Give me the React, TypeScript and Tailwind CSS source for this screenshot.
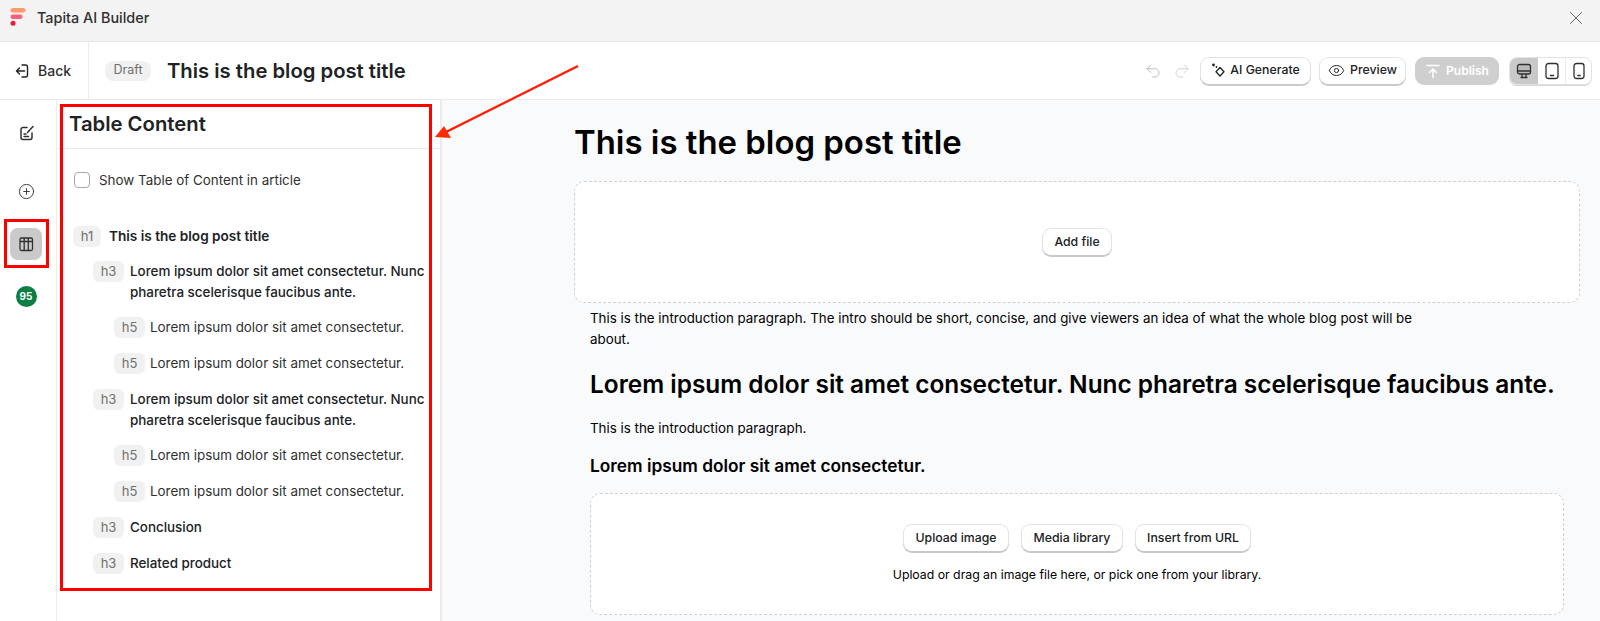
import { Eye, Redo2, Undo2, X, CirclePlus } from "lucide-react";

type TocItem = {
  tag: string;
  text: string;
  level: number;
};

const TOC_ITEMS: TocItem[] = [
  { tag: "h3", text: "Lorem ipsum dolor sit amet consectetur. Nunc pharetra scelerisque faucibus ante.", level: 1 },
  { tag: "h5", text: "Lorem ipsum dolor sit amet consectetur.", level: 2 },
  { tag: "h5", text: "Lorem ipsum dolor sit amet consectetur.", level: 2 },
  { tag: "h3", text: "Lorem ipsum dolor sit amet consectetur. Nunc pharetra scelerisque faucibus ante.", level: 1 },
  { tag: "h5", text: "Lorem ipsum dolor sit amet consectetur.", level: 2 },
  { tag: "h5", text: "Lorem ipsum dolor sit amet consectetur.", level: 2 },
  { tag: "h3", text: "Conclusion", level: 1 },
  { tag: "h3", text: "Related product", level: 1 },
];

const Logo = () => (
  <svg width="16" height="18" viewBox="0 0 16 18" className="shrink-0">
    <rect x="0.5" y="0" width="15" height="4.5" rx="2.2" fill="#fb9a6c" />
    <rect x="0.5" y="6.5" width="12" height="4.5" rx="2.2" fill="#fb5f7e" />
    <circle cx="3" cy="15.300" r="2.500" fill="#ec1c3c" />
  </svg>
);

const BackIcon = () => (
  <svg width="15" height="16" viewBox="0 0 15 16" fill="none" stroke="#202223" strokeWidth="1.4" strokeLinecap="round" strokeLinejoin="round">
    <path d="M7 2h3.500a2 2 0 0 1 2 2v8a2 2 0 0 1-2 2H7" />
    <path d="M9.500 8H1.500M4.500 5l-3 3 3 3" />
  </svg>
);

const EditIcon = () => (
  <svg width="16" height="16" viewBox="0 0 16 16" fill="none" stroke="#303030" strokeWidth="1.5" strokeLinecap="round" strokeLinejoin="round" className="mr-[3px]">
    <path d="M8 2.500H4a2 2 0 0 0-2 2v8a2 2 0 0 0 2 2h7a2 2 0 0 0 2-2V8" />
    <path d="M14 1.500 8.500 7.500M5 9h2M5 11.500h4.500" />
  </svg>
);

const SparkIcon = () => (
  <svg width="15" height="15" viewBox="0 0 15 15" fill="none" stroke="#202223" strokeWidth="1.3">
    <path d="M9 4.500 L13 8.800 L9 13 L5 8.800 Z" strokeLinejoin="round" />
    <circle cx="2.500" cy="2" r="1.400" fill="#202223" stroke="none" />
    <circle cx="5.500" cy="4" r="0.900" fill="#202223" stroke="none" />
  </svg>
);

const PublishIcon = () => (
  <svg width="16" height="16" viewBox="0 0 16 16" fill="none" stroke="white" strokeWidth="1.5" strokeLinecap="round" strokeLinejoin="round">
    <path d="M2 2.500h12M8 14.500V6M4.500 9.500 8 6l3.500 3.500" />
  </svg>
);

const DesktopIcon = () => (
  <svg width="16" height="16" viewBox="0 0 16 16" fill="none" stroke="#303030" strokeWidth="1.3" strokeLinejoin="round">
    <rect x="1.500" y="1.500" width="13" height="9.500" rx="2" fill="#8a8a8a" fillOpacity="0.25" />
    <path d="M1.500 8h13M6 11v3M10 11v3M4.500 14.500h7" />
  </svg>
);

const TabletIcon = () => (
  <svg width="16" height="18" viewBox="0 0 16 18" fill="none" stroke="#303030" strokeWidth="1.3" strokeLinecap="round">
    <rect x="2" y="1.500" width="12" height="15" rx="2.500" />
    <path d="M6.500 13.500h3" />
  </svg>
);

const PhoneIcon = () => (
  <svg width="14" height="18" viewBox="0 0 14 18" fill="none" stroke="#303030" strokeWidth="1.3" strokeLinecap="round">
    <rect x="2" y="1.500" width="10" height="15" rx="2.500" />
    <path d="M5.800 13.500h2.400" />
  </svg>
);

const TableIcon = () => (
  <svg width="16" height="16" viewBox="0 0 16 16" fill="none" stroke="#303030" strokeWidth="1.3">
    <rect x="2" y="2" width="12.500" height="12.500" rx="1.500" />
    <path d="M2 5.500h12.500M6.200 2v12.500M10.300 2v12.500" />
  </svg>
);

const Btn = ({ children, className = "" }: { children: React.ReactNode; className?: string }) => (
  <button className={`flex h-7 items-center justify-center rounded-[9px] border border-[#e3e3e3] border-b-[#c8c8c8] bg-white text-[12.3px] font-medium text-[#202223] shadow-[0_1px_0_#c9c9c9] ${className}`}>
    {children}
  </button>
);

const Tag = ({ label, className = "w-[31px]" }: { label: string; className?: string }) => (
  <span className={`flex h-[21px] shrink-0 items-center justify-center rounded-md bg-[#f1f1f1] text-[13px] text-[#6f6f6f] ${className}`}>
    {label}
  </span>
);

export default function App() {
  return (
    <div className="relative flex h-[621px] w-[1600px] flex-col overflow-hidden bg-white font-['Inter',sans-serif] text-[#202223]">
      {/* window bar */}
      <div className="flex h-[42px] shrink-0 items-center justify-between border-b border-[#e6e6e6] bg-[#f3f3f3] pb-[6px] pl-[10px] pr-[13px]">
        <div className="flex items-center gap-[11px]">
          <Logo />
          <span className="text-[14.4px] font-medium text-[#303030]">Tapita AI Builder</span>
        </div>
        <X size={22} strokeWidth={1} className="text-[#5c5c5c]" />
      </div>

      {/* top bar */}
      <div className="flex h-[58px] shrink-0 items-center border-b border-[#ebebeb]">
        <div className="flex h-full w-[89px] items-center gap-[8px] border-r border-[#ebebeb] pl-[15px]">
          <BackIcon />
          <span className="text-sm font-medium text-[#303030]">Back</span>
        </div>
        <span className="ml-4 flex h-5 w-[46px] items-center justify-center rounded-lg bg-[#f1f1f1] text-[12.5px] text-[#6f6f6f]">Draft</span>
        <h1 className="ml-[16px] pt-[1px] text-[20.25px] font-semibold">This is the blog post title</h1>
        <div className="ml-auto flex items-center pr-[8px]">
          <Undo2 size={18} strokeWidth={1.2} className="text-[#b5b5b5]" />
          <Redo2 size={18} strokeWidth={1.2} className="ml-[11px] text-[#cccccc]" />
          <Btn className="ml-[9px] w-[111px] gap-[4px]">
            <SparkIcon />
            AI Generate
          </Btn>
          <Btn className="ml-2 w-[87px] gap-[5px]">
            <Eye size={17} strokeWidth={1.4} />
            Preview
          </Btn>
          <button className="ml-[9px] flex h-7 w-[84px] items-center justify-center gap-[5px] rounded-[9px] bg-[#cfcfcf] text-xs font-semibold text-white">
            <PublishIcon />
            Publish
          </button>
          <div className="ml-[10px] flex h-7 w-[83px] overflow-hidden rounded-lg border border-[#e3e3e3] shadow-[0_1px_0_#d4d4d4]">
            <div className="flex w-[28px] items-center justify-center bg-[#c9c9c9]">
              <DesktopIcon />
            </div>
            <div className="flex w-[28px] items-center justify-center border-r border-[#ebebeb]">
              <TabletIcon />
            </div>
            <div className="flex flex-1 items-center justify-center">
              <PhoneIcon />
            </div>
          </div>
        </div>
      </div>

      <div className="flex min-h-0 flex-1">
        {/* icon rail */}
        <aside className="flex w-[57px] shrink-0 flex-col items-center border-r border-[#ebebeb] pt-[25px]">
          <EditIcon />
          <CirclePlus size={17} strokeWidth={1.3} className="mr-[4px] mt-[42px] text-[#303030]" />
          <div className="mr-[4px] mt-[28px] flex h-8 w-8 items-center justify-center rounded-lg bg-[#cacaca]">
            <TableIcon />
          </div>
          <span className="mr-[4px] mt-[26px] flex h-[21px] w-[21px] items-center justify-center rounded-full bg-[#0a7f43] text-[10px] font-bold text-white">95</span>
        </aside>

        {/* table of content panel */}
        <section className="w-[385px] shrink-0 border-r-2 border-[#ebebeb]">
          <div className="flex h-[49px] items-center border-b border-[#ebebeb] pl-[12px]">
            <h2 className="text-[20.3px] font-semibold">Table Content</h2>
          </div>
          <label className="ml-[17px] mt-[21px] flex items-center gap-[9px]">
            <span className="h-4 w-4 rounded-[4px] border border-[#a8a8a8] bg-white" />
            <span className="text-[13.4px] text-[#303030]">Show Table of Content in article</span>
          </label>
          <div className="ml-[16px] mt-[36px] flex items-center gap-[8px]">
            <Tag label="h1" className="w-[28px]" />
            <span className="text-[13.6px] font-semibold">This is the blog post title</span>
          </div>
          <ul className="mt-[14px] flex flex-col gap-[15px] pr-1">
            {TOC_ITEMS.map((item, i) => (
              <li key={i} className={`flex items-start ${item.level === 1 ? "gap-[6px] pl-[36px]" : "gap-[5px] pl-[57px]"}`}>
                <Tag label={item.tag} />
                <span className={`text-[13.4px] leading-[20.5px] ${item.level === 1 ? "font-medium text-[#202223]" : "text-[#303030]"}`}>{item.text}</span>
              </li>
            ))}
          </ul>
        </section>

        {/* article preview */}
        <main className="min-w-0 flex-1 bg-[#f9fafb] pl-[132px] pr-[20px] pt-[20px] text-black">
          <h1 className="text-[32.9px] leading-[44px] font-semibold">This is the blog post title</h1>
          <div className="mt-[17px] flex h-[122px] items-center justify-center rounded-[10px] border border-dashed border-[#cfcfcf] bg-white">
            <Btn className="w-[70px]">Add file</Btn>
          </div>
          <div className="pl-4 pr-[16px]">
            <p className="mt-[5px] max-w-[840px] text-[13.35px] leading-[21px]">
              This is the introduction paragraph. The intro should be short, concise, and give viewers an idea of what the whole blog post will be about.
            </p>
            <h2 className="mt-[18px] text-[24.4px] leading-[32px] font-semibold whitespace-nowrap">Lorem ipsum dolor sit amet consectetur. Nunc pharetra scelerisque faucibus ante.</h2>
            <p className="mt-[18px] text-[13.35px] leading-[21px]">This is the introduction paragraph.</p>
            <h3 className="mt-[15px] text-[17.3px] leading-[24px] font-semibold">Lorem ipsum dolor sit amet consectetur.</h3>
            <div className="mt-[15px] flex h-[122px] flex-col items-center justify-center rounded-[10px] border border-dashed border-[#cfcfcf] bg-white">
              <div className="flex gap-3">
                <Btn className="w-[106px]">Upload image</Btn>
                <Btn className="w-[102px]">Media library</Btn>
                <Btn className="w-[116px]">Insert from URL</Btn>
              </div>
              <p className="mt-[14px] text-[12.27px]">Upload or drag an image file here, or pick one from your library.</p>
            </div>
          </div>
        </main>
      </div>

      {/* red annotations */}
      <div className="absolute left-[60px] top-[104px] h-[487px] w-[372px] border-[3px] border-[#ff0000]" />
      <div className="absolute left-[4px] top-[219px] h-[49px] w-[45px] border-[3px] border-[#ff0000]" />
      <svg className="absolute left-[430px] top-[60px]" width="160" height="90" viewBox="0 0 160 90" fill="none">
        <path d="M148 6 L16 72" stroke="#ff1a00" strokeWidth="2.4" />
        <path d="M5 77 L21 78 L14 66 Z" fill="#ff2a00" />
      </svg>
    </div>
  );
}
